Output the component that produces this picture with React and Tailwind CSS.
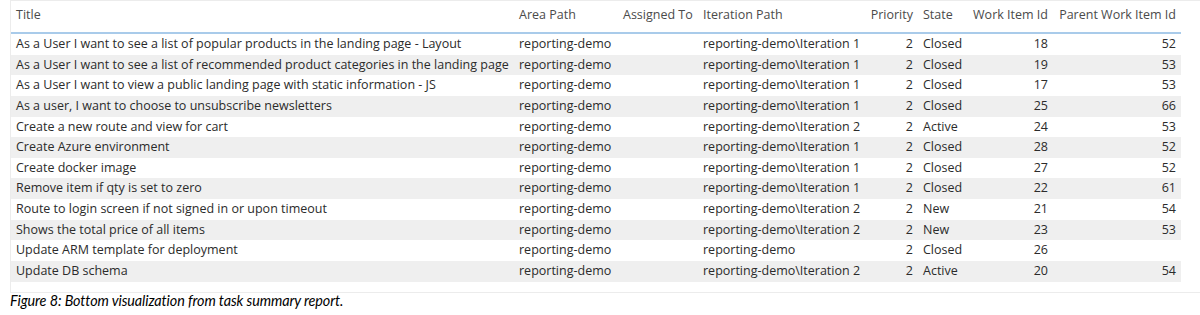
import React from "react";

const rows = [
  ["As a User I want to see a list of popular products in the landing page - Layout", "reporting-demo", "", "reporting-demo\\Iteration 1", "2", "Closed", "18", "52"],
  ["As a User I want to see a list of recommended product categories in the landing page", "reporting-demo", "", "reporting-demo\\Iteration 1", "2", "Closed", "19", "53"],
  ["As a User I want to view a public landing page with static information - JS", "reporting-demo", "", "reporting-demo\\Iteration 1", "2", "Closed", "17", "53"],
  ["As a user, I want to choose to unsubscribe newsletters", "reporting-demo", "", "reporting-demo\\Iteration 1", "2", "Closed", "25", "66"],
  ["Create a new route and view for cart", "reporting-demo", "", "reporting-demo\\Iteration 2", "2", "Active", "24", "53"],
  ["Create Azure environment", "reporting-demo", "", "reporting-demo\\Iteration 1", "2", "Closed", "28", "52"],
  ["Create docker image", "reporting-demo", "", "reporting-demo\\Iteration 1", "2", "Closed", "27", "52"],
  ["Remove item if qty is set to zero", "reporting-demo", "", "reporting-demo\\Iteration 1", "2", "Closed", "22", "61"],
  ["Route to login screen if not signed in or upon timeout", "reporting-demo", "", "reporting-demo\\Iteration 2", "2", "New", "21", "54"],
  ["Shows the total price of all items", "reporting-demo", "", "reporting-demo\\Iteration 2", "2", "New", "23", "53"],
  ["Update ARM template for deployment", "reporting-demo", "", "reporting-demo", "2", "Closed", "26", ""],
  ["Update DB schema", "reporting-demo", "", "reporting-demo\\Iteration 2", "2", "Active", "20", "54"],
];

const headers = ["Title", "Area Path", "Assigned To", "Iteration Path", "Priority", "State", "Work Item Id", "Parent Work Item Id"];
const right = [false, false, false, false, true, false, true, true];
const grid = "grid grid-cols-[503px_104px_80px_169px_51px_50px_85px_128px]";

export default function App() {
  return (
    <div className="w-[1200px] h-[315px] bg-white overflow-hidden" style={{ fontFamily: '"Open Sans", "Noto Sans", sans-serif' }}>
      <div className="ml-[10px] h-[293px] border-l border-t border-b border-[#ececec]">
        <div className="w-[1170px]">
          <div className={`${grid} h-[33px] pb-[3px] items-center border-b-2 border-[#a9cbea] text-[12.5px] text-[#4b4b4b]`}>
            {headers.map((h, i) => (
              <div key={i} className={right[i] ? "text-right pr-[5px] whitespace-nowrap" : "pl-[5px] whitespace-nowrap"}>{h}</div>
            ))}
          </div>
          {rows.map((r, ri) => (
            <div key={ri} className={`${grid} h-[20.65px] items-center text-[12.5px] text-[#2b2b2b] ${ri % 2 === 1 ? "bg-[#efefef]" : "bg-white"}`}>
              {r.map((c, i) => (
                <div key={i} className={right[i] ? "text-right pr-[5px] whitespace-nowrap" : "pl-[5px] whitespace-nowrap"}>{c}</div>
              ))}
            </div>
          ))}
        </div>
      </div>
      <div className="pl-[10px] pt-0 text-[14.4px] italic text-black leading-[16px] tracking-[-0.1px]" style={{ fontFamily: 'Lato, "Open Sans", sans-serif' }}>
        Figure 8: Bottom visualization from task summary report.
      </div>
    </div>
  );
}
